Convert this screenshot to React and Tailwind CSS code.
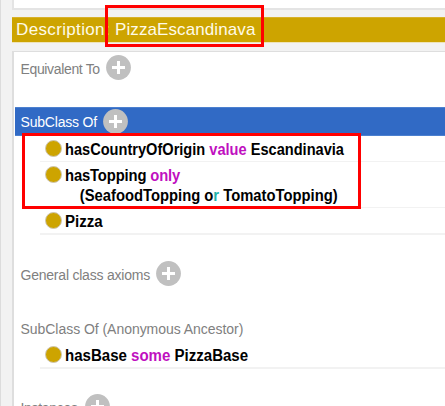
function AddButton({ className = "" }) {
  return (
    <svg className={`h-[25px] w-[25px] shrink-0 ${className}`} viewBox="0 0 25 25">
      <circle cx="12.5" cy="12.5" r="12.4" fill="#c0c0c0" />
      <path d="M12.5 6v13M6 12.5h13" stroke="#fff" strokeWidth="3" />
    </svg>
  );
}

function ClassDot() {
  return <span className="h-[17px] w-[17px] shrink-0 rounded-full border border-[#cdc6b4] bg-[#cda400]" />;
}

function Keyword({ children }) {
  return <span className="text-[#bf10bf]">{children}</span>;
}

function AxiomRow({ className = "", textClassName = "", children }) {
  return (
    <div className={`ml-[26px] flex items-start border-[#f2f2f2] pl-[5px] text-[16px] leading-[20px] font-bold whitespace-pre text-black ${className}`}>
      <ClassDot />
      <div className={`ml-[3px] origin-left ${textClassName}`}>{children}</div>
    </div>
  );
}

export default function App() {
  return (
    <div className="relative h-[406px] w-[445px] overflow-hidden border-l border-[#dcdcdc] bg-[#f2f2f2] pl-[11px] font-['Liberation_Sans',Arial,sans-serif]">
      <div className="h-[10px] border-b-2 border-l-2 border-[#e4e4e4] bg-white" />
      <div className="mt-[7px] flex h-[26px] items-center border-t border-b border-t-[#d8b12a] border-b-[#eee3b8] bg-[#cda400] pl-[4px] text-[17px] text-[#fffbe8]">
        <span className="w-[99px] tracking-[0.35px]">Description:</span>
        <span className="tracking-[0.1px]">PizzaEscandinava</span>
      </div>
      <div className="mt-[8px] h-[380px] border-t border-l-2 border-[#dedede] bg-white text-[14px] text-[#808080]">
        <div className="flex h-[55px] items-start pt-[3px] pl-[6.5px]">
          <span className="w-[85.5px] leading-[29px] tracking-[-0.35px]">Equivalent To</span>
          <AddButton />
        </div>
        <div className="ml-px flex h-[29px] items-center border-t border-b border-[#4c80cf] bg-[#316ac5] pl-[5.5px] text-white">
          <span className="w-[82.5px] pt-[2px] tracking-[-0.2px]">SubClass Of</span>
          <AddButton className="-mt-px" />
        </div>
        <AxiomRow className="h-[26px] border-b pt-[4px]" textClassName="scale-x-[0.912]">
          hasCountryOfOrigin <Keyword>value</Keyword> Escandinavia
        </AxiomRow>
        <AxiomRow className="h-[46px] border-b pt-[4px]" textClassName="scale-x-[0.924]">
          <div className="tracking-[-0.15px]">
            hasTopping <Keyword>only</Keyword>
          </div>
          <div className="pl-[16px]">
            (SeafoodTopping o<span className="text-[#20b2aa]">r</span> TomatoTopping)
          </div>
        </AxiomRow>
        <AxiomRow className="h-[27px] border-b-2 pt-[4px]" textClassName="scale-x-[0.94]">Pizza</AxiomRow>
        <div className="flex h-[81px] items-start pt-[26px] pl-[6.5px]">
          <span className="w-[135.5px] leading-[29px] tracking-[-0.22px]">General class axioms</span>
          <AddButton />
        </div>
        <div className="h-[26px] pl-[6.5px] leading-[27px] tracking-[-0.04px]">SubClass Of (Anonymous Ancestor)</div>
        <AxiomRow className="h-[27px] border-b-2 pt-[4px]" textClassName="scale-x-[0.94]">
          hasBase <Keyword>some</Keyword> PizzaBase
        </AxiomRow>
        <div className="flex items-start pt-[25px] pl-[6.5px]">
          <span className="w-[64.5px] leading-[29px] tracking-[-0.3px]">Instances</span>
          <AddButton />
        </div>
      </div>
      <div className="absolute top-[5px] left-[104px] h-[42px] w-[159px] border-3 border-[#ff0000]" />
      <div className="absolute top-[133px] left-[21px] h-[76px] w-[339px] border-3 border-[#ff0000]" />
    </div>
  );
}
